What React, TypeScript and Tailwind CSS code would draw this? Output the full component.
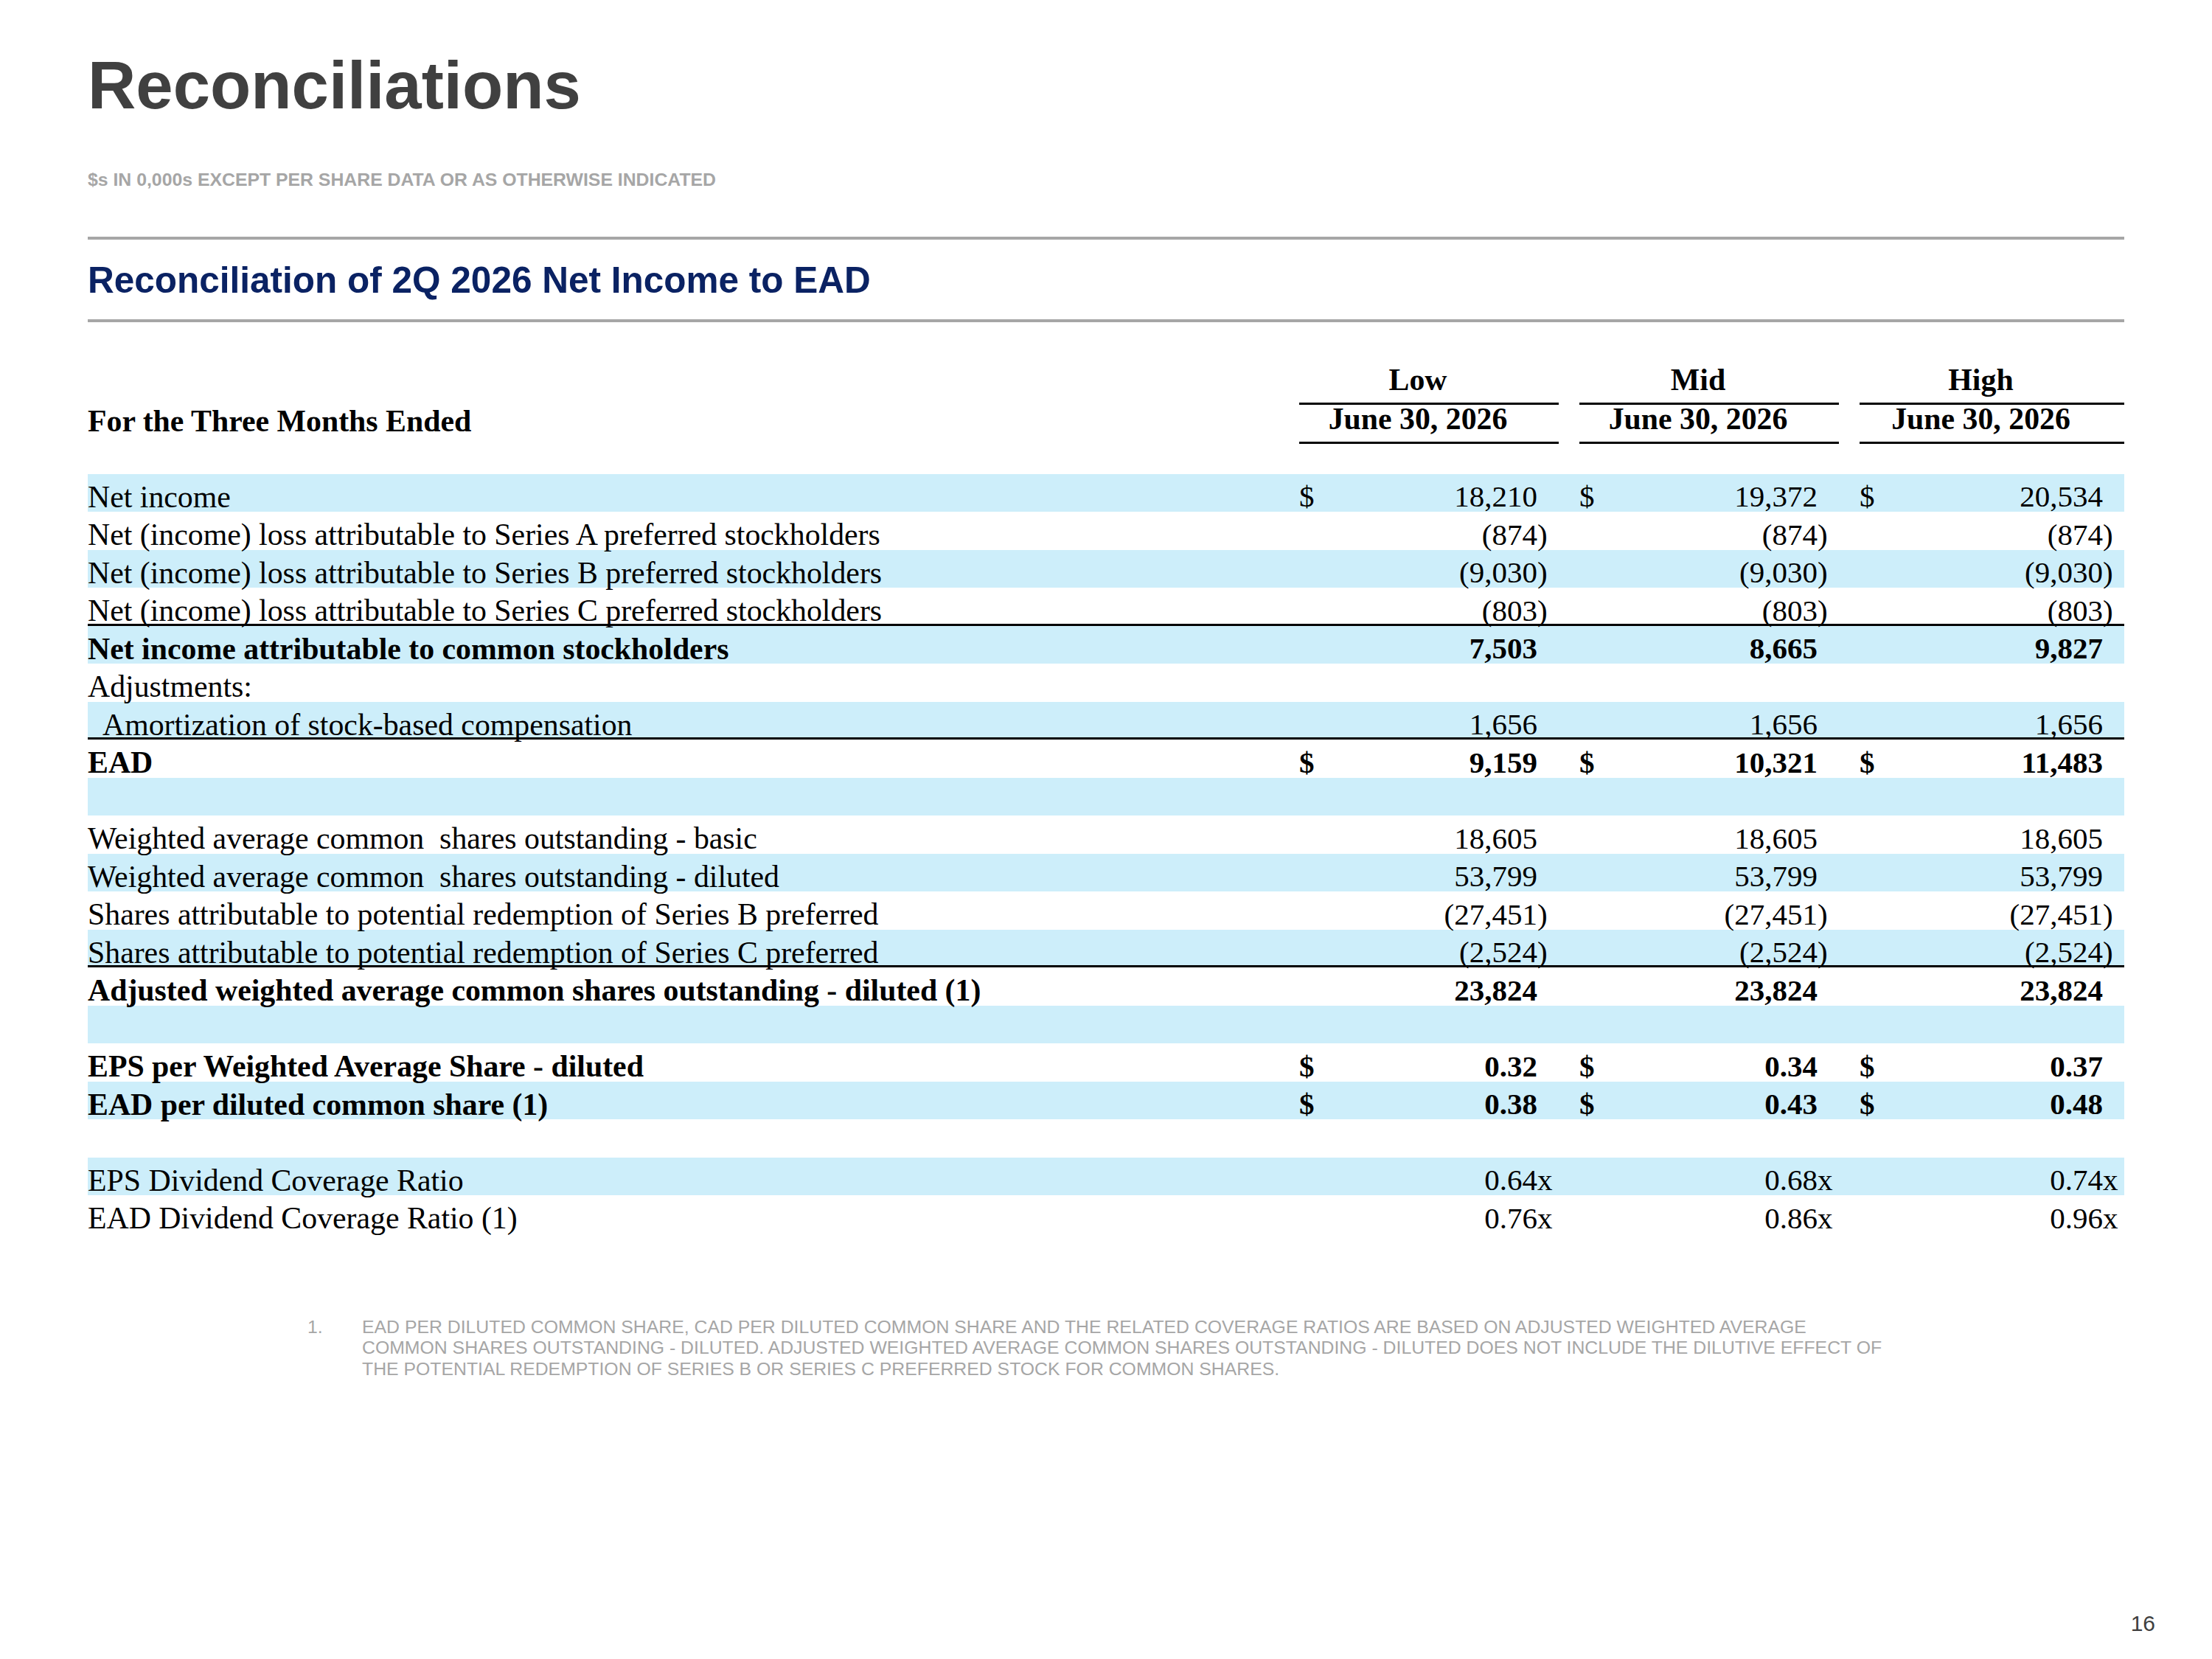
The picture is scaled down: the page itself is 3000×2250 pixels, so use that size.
type Row = {
  label?: string
  v?: string[]
  dollar?: boolean
  bold?: boolean
  line?: boolean
  indent?: boolean
}

const rows: Row[] = [
  { label: 'Net income', v: ['18,210', '19,372', '20,534'], dollar: true },
  { label: 'Net (income) loss attributable to Series A preferred stockholders', v: ['(874)', '(874)', '(874)'] },
  { label: 'Net (income) loss attributable to Series B preferred stockholders', v: ['(9,030)', '(9,030)', '(9,030)'] },
  { label: 'Net (income) loss attributable to Series C preferred stockholders', v: ['(803)', '(803)', '(803)'], line: true },
  { label: 'Net income attributable to common stockholders', v: ['7,503', '8,665', '9,827'], bold: true },
  { label: 'Adjustments:' },
  { label: 'Amortization of stock-based compensation', v: ['1,656', '1,656', '1,656'], indent: true, line: true },
  { label: 'EAD', v: ['9,159', '10,321', '11,483'], dollar: true, bold: true },
  {},
  { label: 'Weighted average common  shares outstanding - basic', v: ['18,605', '18,605', '18,605'] },
  { label: 'Weighted average common  shares outstanding - diluted', v: ['53,799', '53,799', '53,799'] },
  { label: 'Shares attributable to potential redemption of Series B preferred', v: ['(27,451)', '(27,451)', '(27,451)'] },
  { label: 'Shares attributable to potential redemption of Series C preferred', v: ['(2,524)', '(2,524)', '(2,524)'], line: true },
  { label: 'Adjusted weighted average common shares outstanding - diluted (1)', v: ['23,824', '23,824', '23,824'], bold: true },
  {},
  { label: 'EPS per Weighted Average Share - diluted', v: ['0.32', '0.34', '0.37'], dollar: true, bold: true },
  { label: 'EAD per diluted common share (1)', v: ['0.38', '0.43', '0.48'], dollar: true, bold: true },
  {},
  { label: 'EPS Dividend Coverage Ratio', v: ['0.64x', '0.68x', '0.74x'] },
  { label: 'EAD Dividend Coverage Ratio (1)', v: ['0.76x', '0.86x', '0.96x'] },
]

const Val = ({ value, dollar }: { value: string; dollar?: boolean }) => {
  const tail = value.endsWith(')') || value.endsWith('x') ? value.slice(-1) : ''
  const main = tail ? value.slice(0, -1) : value
  return (
    <div className="flex items-center justify-between">
      <span>{dollar ? '$' : ''}</span>
      <span className="flex">
        <span>{main}</span>
        <span className="w-[29px] text-left">{tail}</span>
      </span>
    </div>
  )
}

const App = () => {
  return (
    <div className="flex flex-col w-[3000px] h-[2250px] bg-white overflow-hidden">
      <div className="px-[119px] pt-[71px]">
        <h1 className="font-['Liberation_Sans',Arial,sans-serif] font-bold text-[90.5px] leading-none text-[#404040]">
          Reconciliations
        </h1>
        <p className="mt-[70px] font-['Liberation_Sans',Arial,sans-serif] font-bold text-[24.8px] leading-none text-[#a6a6a6] whitespace-nowrap">
          $s IN 0,000s EXCEPT PER SHARE DATA OR AS OTHERWISE INDICATED
        </p>
        <div className="mt-[65px] h-[4px] bg-[#a6a6a6]"></div>
        <h2 className="mt-[30px] font-['Liberation_Sans',Arial,sans-serif] font-bold text-[49.5px] leading-none text-[#0a2263] whitespace-nowrap">
          Reconciliation of 2Q 2026 Net Income to EAD
        </h2>
        <div className="mt-[28px] h-[4px] bg-[#a6a6a6]"></div>

        <div className="mt-[47px] font-['Liberation_Serif','Times_New_Roman',serif] text-[41px] text-black">
          {/* column headings */}
          <div className="grid grid-cols-[1615px_352px_352px_359px] gap-x-[28px] h-[53px] font-bold text-[41.8px]">
            <div></div>
            {['Low', 'Mid', 'High'].map((h) => (
              <div key={h} className="flex items-end justify-center pr-[30px] border-b-[3px] border-black">
                {h}
              </div>
            ))}
          </div>
          <div className="grid grid-cols-[1615px_352px_352px_359px] gap-x-[28px] h-[53px] font-bold text-[41.8px]">
            <div className="flex items-end whitespace-nowrap">For the Three Months Ended</div>
            {[0, 1, 2].map((i) => (
              <div key={i} className="flex items-end justify-center pr-[30px] border-b-[3px] border-black whitespace-nowrap">
                June 30, 2026
              </div>
            ))}
          </div>

          <div className="mt-[53px]">
            {rows.map((r, i) => (
              <div
                key={i}
                className={`grid grid-cols-[1615px_352px_352px_359px] gap-x-[28px] h-[51.5px] items-center ${i % 2 === 0 ? 'bg-[#cdeefa]' : ''} ${r.line ? 'border-b-[3px] border-black' : ''} ${r.bold ? 'font-bold' : ''}`}
              >
                <div className={`whitespace-pre text-[41.8px] ${r.indent ? 'pl-[20px]' : ''}`}>{r.label ?? ''}</div>
                {r.v ? r.v.map((v, j) => <Val key={j} value={v} dollar={r.dollar} />) : [0, 1, 2].map((j) => <div key={j}></div>)}
              </div>
            ))}
          </div>
        </div>

        <div className="mt-[113px] pl-[298px] flex font-['Liberation_Sans',Arial,sans-serif] text-[24.8px] leading-[28.5px] text-[#a6a6a6]">
          <span className="w-[74px]">1.</span>
          <p className="whitespace-nowrap">
            EAD PER DILUTED COMMON SHARE, CAD PER DILUTED COMMON SHARE AND THE RELATED COVERAGE RATIOS ARE BASED ON ADJUSTED WEIGHTED AVERAGE
            <br />
            COMMON SHARES OUTSTANDING - DILUTED. ADJUSTED WEIGHTED AVERAGE COMMON SHARES OUTSTANDING - DILUTED DOES NOT INCLUDE THE DILUTIVE EFFECT OF
            <br />
            THE POTENTIAL REDEMPTION OF SERIES B OR SERIES C PREFERRED STOCK FOR COMMON SHARES.
          </p>
        </div>
      </div>

      <div className="mt-auto pr-[77px] pb-[33px] text-right font-['Liberation_Sans',Arial,sans-serif] text-[30px] leading-none text-[#404040]">
        16
      </div>
    </div>
  )
}

export default App
